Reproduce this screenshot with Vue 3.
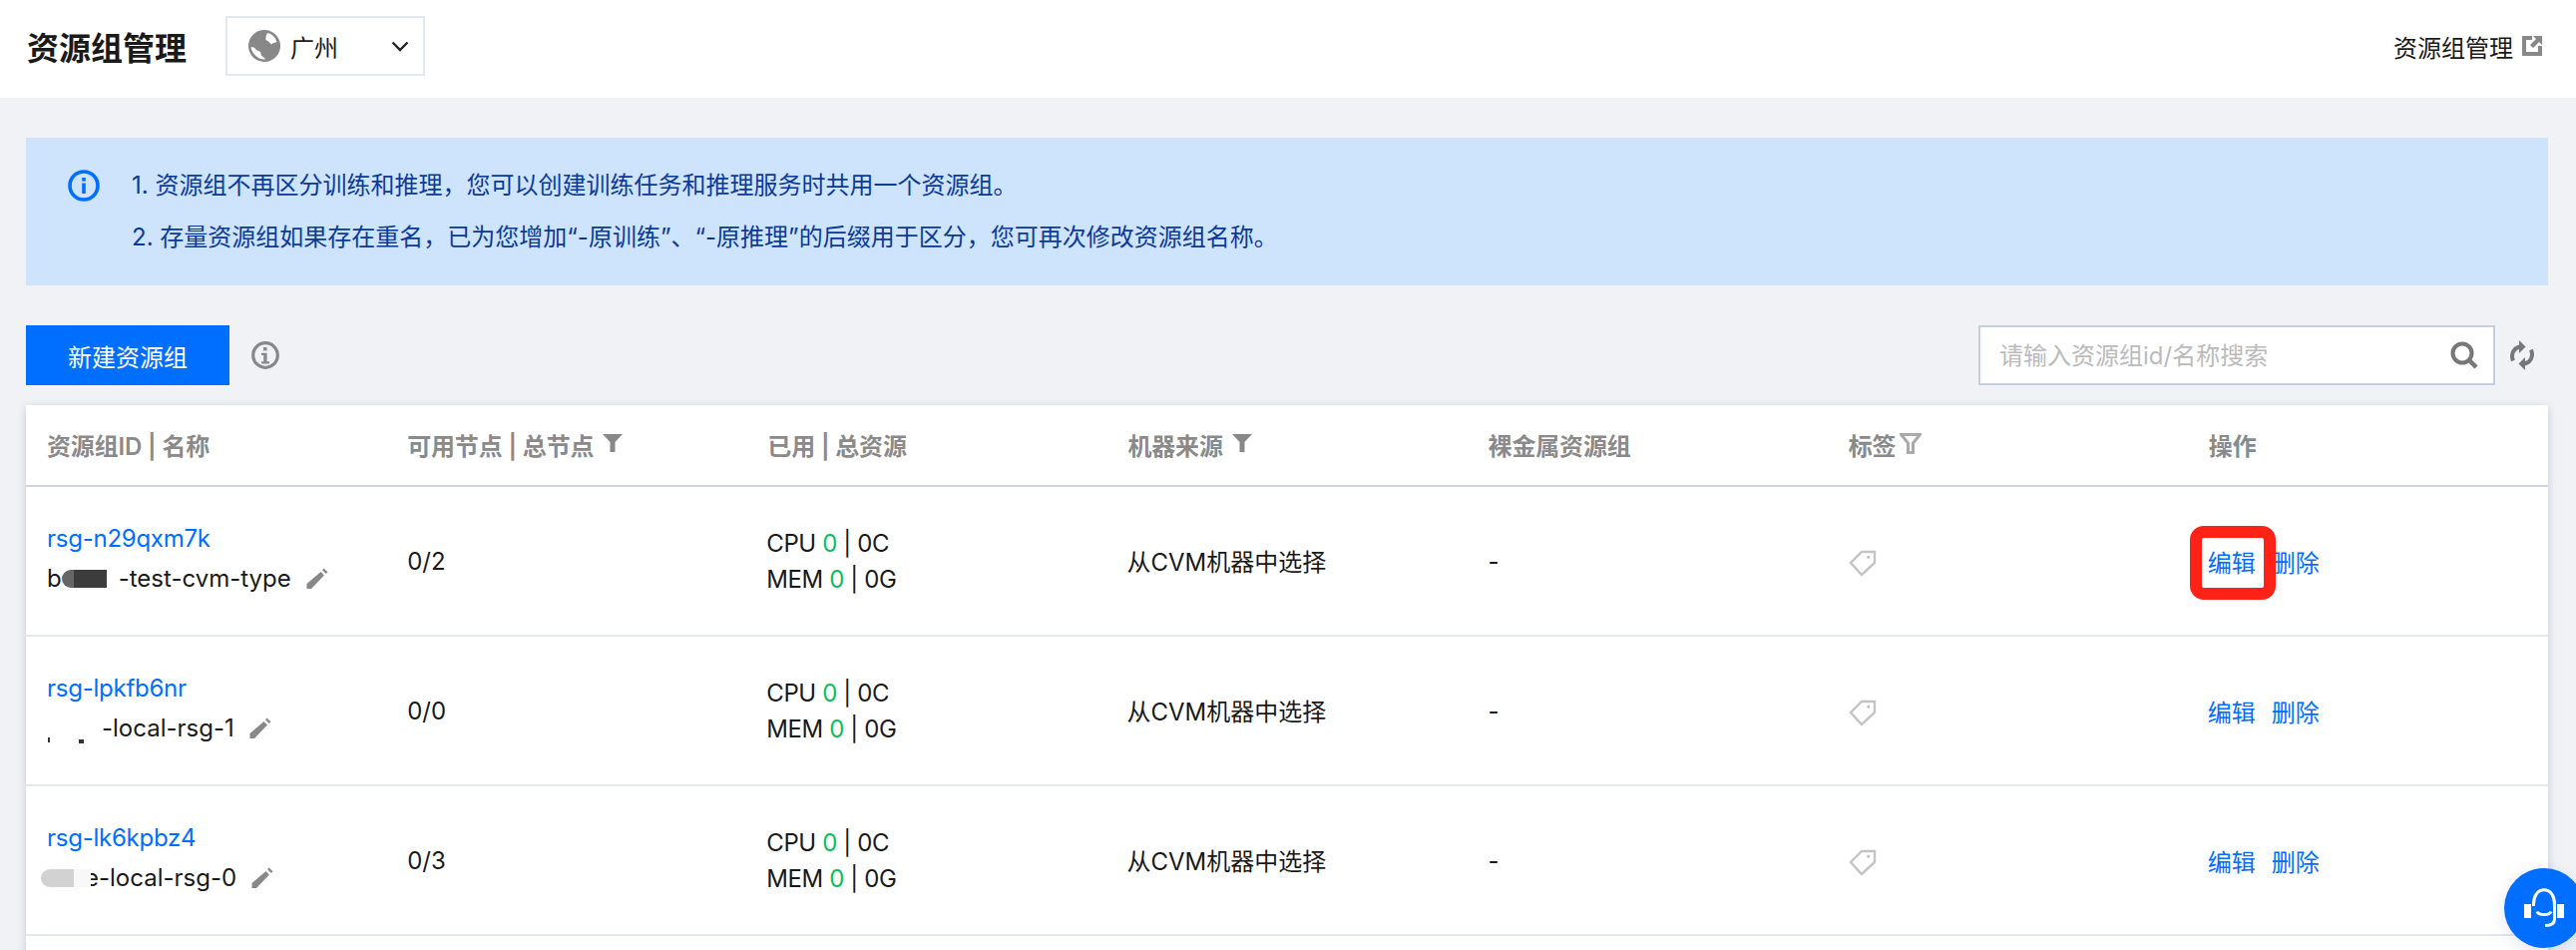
<script setup>
const columns = [
  { label: '资源组ID | 名称' },
  { label: '可用节点 | 总节点', filter: 'solid' },
  { label: '已用 | 总资源' },
  { label: '机器来源', filter: 'solid' },
  { label: '裸金属资源组' },
  { label: '标签', filter: 'line' },
  { label: '操作' },
]

const rows = [
  { id: 'rsg-n29qxm7k', mask: 'one', prefix: 'b', name: '-test-cvm-type', nodes: '0/2' },
  { id: 'rsg-lpkfb6nr', mask: 'two', prefix: '', name: '-local-rsg-1', nodes: '0/0' },
  { id: 'rsg-lk6kpbz4', mask: 'three', prefix: '', name: 'e-local-rsg-0', nodes: '0/3' },
  { id: 'rsg-x', mask: '', prefix: '', name: '', nodes: '', ghost: true },
]
</script>

<template>
  <div class="page">
    <header class="topbar">
      <h1 class="title">资源组管理</h1>
      <div class="select">
        <svg class="globe" viewBox="0 0 32 32">
          <circle cx="16" cy="16" r="16" fill="#888" />
          <path d="M19 3c4.500 .8 8 4 9.500 9-2 1-4 .6-5.500 2.500-1.500-1.500-3-3.500-5.500-4.500-.5-2.500 .5-5 1.500-7z" fill="#fff" />
          <path d="M2.500 17.500c2-.5 3.500 0 4.500 1.500 1 2 3.500 1.500 5 3 1 1.500 0 3 1.500 4 1.200 .8 2.500 1.800 3.500 3.500-3.500 .2-7-1-9.500-3.500-2.700-2.500-4.500-5.500-5-8.500z" fill="#fff" />
        </svg>
        <span class="select-text">广州</span>
        <svg class="chevron" viewBox="0 0 18 11">
          <path d="M1.500 1.500 9 9l7.500-7.500" fill="none" stroke="#222" stroke-width="2.400" />
        </svg>
      </div>
      <a class="doc-link">
        资源组管理
        <svg class="ext" viewBox="0 0 20 20">
          <path d="M10 2H2v16h16v-8" fill="none" stroke="#888" stroke-width="4" />
          <path d="M11 0h9v9l-3-3-6 6-3-3 6-6z" fill="#888" />
        </svg>
      </a>
    </header>

    <main class="content">
      <section class="alert">
        <svg class="alert-icon" viewBox="0 0 32 32">
          <circle cx="16" cy="16" r="14" fill="none" stroke="#006eff" stroke-width="3.600" />
          <rect x="14.200" y="8" width="3.600" height="3.600" fill="#006eff" />
          <rect x="14.200" y="13.500" width="3.600" height="10.500" fill="#006eff" />
        </svg>
        <div class="alert-text">
          <p>1. 资源组不再区分训练和推理，您可以创建训练任务和推理服务时共用一个资源组。</p>
          <p>2. 存量资源组如果存在重名，已为您增加“-原训练”、“-原推理”的后缀用于区分，您可再次修改资源组名称。</p>
        </div>
      </section>

      <section class="toolbar">
        <button class="primary">新建资源组</button>
        <svg class="tip" viewBox="0 0 28 28">
          <circle cx="14" cy="14" r="12.300" fill="none" stroke="#888" stroke-width="3.200" />
          <rect x="12" y="6" width="3.600" height="3.400" fill="#888" />
          <path d="M10 11.800h5.600v8.400h2.400v2.200h-8v-2.200h2.200v-6.200H10z" fill="#888" />
        </svg>
        <div class="search">
          <input class="search-input" placeholder="请输入资源组id/名称搜索" />
          <svg class="search-icon" viewBox="0 0 28 28">
            <circle cx="12" cy="12" r="9.500" fill="none" stroke="#777" stroke-width="4" />
            <path d="M18.500 18.500 26 26" stroke="#777" stroke-width="4.500" />
          </svg>
        </div>
        <svg class="refresh" viewBox="0 0 26 32">
          <path d="M4 21.500C1.500 15.500 4 9 10.500 7.500" fill="none" stroke="#777" stroke-width="4" />
          <path d="M10 1 16.500 7.500 10 14z" fill="#777" />
          <path d="M22 10.500c2.500 6 0 12.500-6.500 14" fill="none" stroke="#777" stroke-width="4" />
          <path d="M16 31 9.500 24.500 16 18z" fill="#777" />
        </svg>
      </section>

      <section class="table">
        <div class="row head">
          <div v-for="col in columns" :key="col.label" class="cell">
            <span class="head-label">{{ col.label }}</span>
            <svg v-if="col.filter === 'solid'" class="filter" viewBox="0 0 20 18">
              <path d="M0 0h20l-7.500 8v10h-5V8z" fill="#888" />
            </svg>
            <svg v-if="col.filter === 'line'" class="filter line" viewBox="0 0 22 21">
              <path d="M1.500 1.500h19l-7 8.500v9.500h-5V10z" fill="none" stroke="#aaa" stroke-width="3" />
            </svg>
          </div>
        </div>

        <div v-for="row in rows" :key="row.id" class="row body">
          <template v-if="!row.ghost">
            <div class="cell stack">
              <a class="link tight-latin">{{ row.id }}</a>
              <div class="name-line">
                <span v-if="row.prefix">{{ row.prefix }}</span>
                <span class="mask" :class="row.mask"><i></i><i></i></span>
                <span>{{ row.name }}</span>
                <svg class="pencil" viewBox="0 0 23 23">
                  <path d="M15.500 4 19 7.500 6 21H1.500v-5zM17 2.200 18.500 .5 22.500 4.200 20.800 6z" fill="#888" />
                </svg>
              </div>
            </div>
            <div class="cell">{{ row.nodes }}</div>
            <div class="cell stack tight">
              <div>CPU <span class="ok">0</span> | 0C</div>
              <div>MEM <span class="ok">0</span> | 0G</div>
            </div>
            <div class="cell source">从CVM机器中选择</div>
            <div class="cell">-</div>
            <div class="cell">
              <svg class="tag" viewBox="0 0 28 27">
                <path d="M26 2H13L2 13l11 12L26 13z" fill="none" stroke="#c4c4c4" stroke-width="2.400" />
                <rect x="18.500" y="6" width="2.600" height="2.600" fill="#bbb" />
              </svg>
            </div>
            <div class="cell actions">
              <a class="link">编辑</a>
              <a class="link">删除</a>
            </div>
          </template>
        </div>
      </section>
    </main>

    <div class="marker"></div>
    <button class="chat" aria-label="客服">
      <svg viewBox="0 0 40 40">
        <rect x="0" y="16" width="7" height="14" fill="#fff" />
        <rect x="33" y="16" width="7" height="14" fill="#fff" />
        <path d="M9.500 18C9 8 13.500 1.800 20 1.800S31 8 30.500 18v13c0 4-2.500 6.500-9.500 6.500" fill="none" stroke="#fff" stroke-width="3" />
        <path d="M13 23.500c1.500 4 12.500 4 14 0" fill="none" stroke="#fff" stroke-width="3" />
      </svg>
    </button>
  </div>
</template>

<style>
html, body { margin: 0; background: #f1f2f6; }
</style>

<style scoped>
.page {
  position: relative;
  width: 2582px;
  height: 952px;
  overflow: hidden;
  background: #f0f2f6;
  font-family: Inter, "Noto Sans CJK SC", sans-serif;
  font-size: 24px;
  color: #1a1a1a;
}
.topbar {
  height: 98px;
  box-sizing: border-box;
  background: #fff;
  display: flex;
  align-items: center;
  padding: 0 34px 6px 27px;
}
.title {
  margin: 0 41px 0 0;
  font-size: 32px;
  font-weight: 600;
  width: 158px;
  white-space: nowrap;
}
.select {
  width: 200px;
  height: 60px;
  box-sizing: border-box;
  border: 2px solid #e3e7ef;
  display: flex;
  align-items: center;
  padding-left: 21px;
}
.globe { width: 32px; height: 32px; }
.select-text { margin-left: 10px; }
.chevron { width: 18px; height: 11px; margin-left: auto; margin-right: 14px; }
.doc-link {
  margin-left: auto;
  display: flex;
  align-items: center;
  gap: 9px;
}
.ext { width: 20px; height: 20px; }

.content { padding: 40px 28px 0 26px; }
.alert {
  height: 148px;
  box-sizing: border-box;
  background: #cde4fc;
  display: flex;
  padding: 22px 0 22px 42px;
  color: #0b3a99;
}
.alert-icon { width: 32px; height: 32px; margin-top: 10px; }
.alert-text { margin-left: 32px; }
.alert-text p { margin: 0; line-height: 52px; }

.toolbar {
  margin-top: 40px;
  height: 60px;
  display: flex;
  align-items: center;
}
.primary {
  width: 204px;
  height: 60px;
  border: 0;
  background: #006eff;
  color: #fff;
  font: inherit;
}
.tip { width: 28px; height: 28px; margin-left: 22px; }
.search {
  margin-left: auto;
  width: 518px;
  height: 60px;
  box-sizing: border-box;
  border: 2px solid #c8cfdc;
  background: #fff;
  display: flex;
  align-items: center;
}
.search-input {
  flex: 1;
  min-width: 0;
  border: 0;
  outline: 0;
  background: transparent;
  font: inherit;
  padding-left: 19px;
}
.search-input::placeholder { color: #bbb; opacity: 1; }
.search-icon { width: 28px; height: 28px; margin-right: 15px; }
.refresh { width: 26px; height: 32px; margin-left: 14px; margin-right: 13px; }

.table {
  margin-top: 20px;
  background: #fff;
  box-shadow: 0 2px 8px rgba(54, 58, 80, 0.22);
}
.row {
  display: grid;
  grid-template-columns: repeat(7, 1fr);
  box-sizing: border-box;
}
.head {
  height: 82px;
  border-bottom: 2px solid #cfd5de;
  color: #8a8a8a;
  font-weight: 600;
  letter-spacing: -0.15px;
}
.body {
  height: 150px;
  border-bottom: 2px solid #e4e7ec;
}
.cell {
  padding-left: 21px;
  display: flex;
  align-items: center;
  white-space: nowrap;
}
.head .cell { padding-bottom: 2px; }
.filter { width: 20px; height: 18px; margin-left: 9px; margin-bottom: 3px; }
.filter.line { width: 22px; height: 21px; margin-left: 4px; margin-bottom: 2px; }
.stack {
  flex-direction: column;
  align-items: flex-start;
  justify-content: center;
  line-height: 40px;
  padding-bottom: 4px;
}
.stack.tight { line-height: 36px; padding-bottom: 0; padding-top: 2px; letter-spacing: -0.4px; padding-left: 20px; }
.source { padding-bottom: 2px; padding-left: 20px; }
.tight-latin { letter-spacing: -0.25px; }
.link { color: #006eff; }
.ok { color: #0abf5b; }
.name-line { display: flex; align-items: center; position: relative; }
.mask { display: inline-flex; height: 18px; flex: none; position: relative; }
.mask i { display: block; height: 100%; }
.mask.one { width: 57px; margin-left: 0; }
.mask.one i:first-child {
  width: 45px;
  background: linear-gradient(90deg, #666 0 26%, #3c3c3c 26%);
  border-radius: 9px 0 0 9px;
}
.mask.one i:last-child { width: 12px; }
.mask.two { width: 61px; margin-left: -6px; }
.mask.two i { position: absolute; background: #333; }
.mask.two i:first-child { left: 7px; bottom: -5px; width: 2px; height: 5px; }
.mask.two i:last-child { left: 38px; bottom: -6px; width: 5px; height: 4px; }
.mask.three { width: 50px; margin-left: -6px; margin-right: -6px; z-index: 1; }
.mask.three i:first-child { width: 33px; background: #d2d2d2; border-radius: 9px 0 0 9px; }
.mask.three i:last-child { width: 17px; background: #f8f8f8; }
.pencil { width: 23px; height: 23px; margin-left: 14px; }
.tag { width: 28px; height: 27px; margin-top: 4px; }
.actions { gap: 16px; padding-left: 20px; }

.marker {
  position: absolute;
  left: 2195px;
  top: 527px;
  width: 86px;
  height: 74px;
  box-sizing: border-box;
  border: 12px solid #ff2216;
  border-radius: 14px;
}
.chat {
  position: absolute;
  left: 2510px;
  top: 870px;
  width: 80px;
  height: 80px;
  border: 0;
  padding: 20px;
  border-radius: 50%;
  background: #006eff;
  box-shadow: 0 4px 16px rgba(0, 40, 100, 0.12);
}
.chat svg { display: block; width: 40px; height: 40px; }
</style>
